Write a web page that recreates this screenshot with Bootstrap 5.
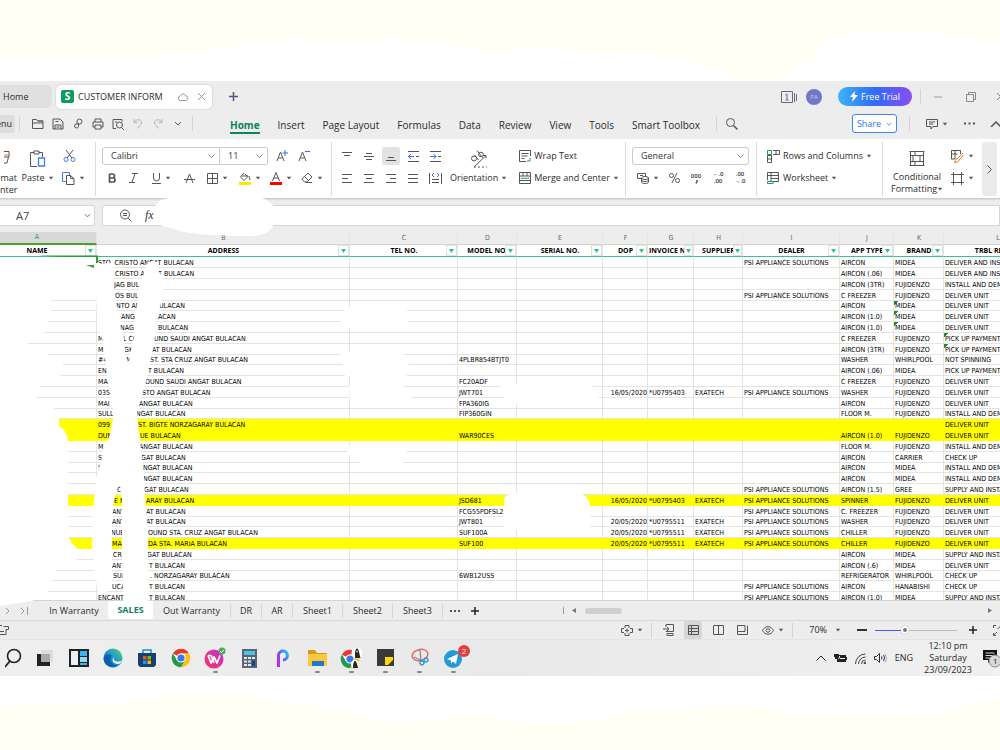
<!DOCTYPE html>
<html lang="en">
<head>
<meta charset="utf-8">
<meta name="viewport" content="width=device-width, initial-scale=1">
<title>Customer Inform - Spreadsheet</title>
<link href="https://cdn.jsdelivr.net/npm/bootstrap@5.3.0/dist/css/bootstrap.min.css" rel="stylesheet">
<style>
body{font:9px/12px "Open Sans","Noto Sans",sans-serif;color:#2b2b2b;background:#fffff3;overflow:hidden}
svg{display:block;flex:none;fill:none;stroke:#555;stroke-width:1}
button{border:0;background:none;padding:0;color:inherit;display:flex;align-items:center;justify-content:center;font:inherit;white-space:nowrap}
a{color:inherit;text-decoration:none;white-space:nowrap}
.desk{min-height:100vh}
.edge{width:100%;height:81px;stroke:none}
.edge-low{height:74px}
.app-shell{background:#ededed}
.slot{display:flex;align-items:center;justify-content:center;flex:none;gap:4px}
.s20{width:20px}.s22{width:22px}.s24{width:24px}.s28{width:28px}.s31{width:31px}.s34{width:34px}
.vline{width:1px;height:15px;background:#d4d4d4;flex:none}
/* title bar */
.titlebar{height:30px;padding-top:1px}
.home-tab{width:52px;height:23px;background:#e0e0e0;border-radius:0 5px 5px 0;padding-left:3px}
.doc-tab{width:156px;height:24px;margin-left:4px;padding:0 6px 0 5px;background:#fff;border-radius:5px;box-shadow:0 0 2px #bbb}
.logo-s{width:13px;height:13px;background:#0e9a60;color:#fff;border-radius:2px;font-weight:700;font-size:10px;line-height:13px;text-align:center}
.avatar{width:16px;height:16px;border-radius:50%;background:#7278c8;color:#c9cbf0;font-size:6px}
.trial{width:74px;height:19px;border-radius:10px;color:#fff;background:linear-gradient(90deg,#3cb4f8,#2f6cf6 50%,#8a4df5);gap:3px}
/* menu bar */
.menubar{height:28px;padding-bottom:3px;font-size:10px}
.menu-btn{width:15px;height:18px;background:#dedede;border-radius:0 3px 3px 0;font-size:9px;justify-content:flex-end;padding-right:3px;overflow:hidden}
.menu-links{gap:18px;margin-left:37px}
.menu-links a{padding:5px 0 3px}
.menu-links a.now{color:#0b8457;font-weight:700;border-bottom:2px solid #0b8457;padding-bottom:1px}
.share{width:45px;height:19px;border:1px solid #3a86f7;border-radius:3px;background:#fff;color:#2a78f0;gap:5px;font-size:9px}
/* ribbon */
.ribbon{height:60px;background:#fff;border-bottom:1px solid #ccc;box-shadow:0 1px 1px #ddd;position:relative}
.grp{height:54px;margin-top:3px;border-right:1px solid #dcdcdc;flex:none}
.grp-a{width:96px}.grp-b{width:236px;padding-left:6px}.grp-c{width:294px}.grp-d{width:131px;padding-left:6px}.grp-e{width:126px;padding-left:10px}.grp-f{padding-left:8px;border:0}
.grp-c .slot,.grp-e .slot{gap:3px}
.line-t,.line-b{height:22px;display:flex;align-items:center}
.line-t{margin-top:3px}
.pick{height:18px;border:1px solid #ccc;border-radius:3px;background:#fff;font:inherit;color:#333;appearance:none;padding:0 8px;
 background:#fff url("data:image/svg+xml,%3Csvg xmlns='http://www.w3.org/2000/svg' width='7' height='5'%3E%3Cpath d='M.5.5l3 3 3-3' fill='none' stroke='%23888'/%3E%3C/svg%3E") no-repeat right 4px center}
.pick-font{width:118px;border-radius:3px 0 0 3px}.pick-size{width:48px;border-radius:0 3px 3px 0;border-left:0}.pick-num{width:117px}
.on-btn{background:#e2e2e2;border-radius:2px;width:18px;height:18px;margin:0 2px}
.more-btn{width:15px;height:54px;background:#ebebeb;border-radius:3px;margin-left:8px}
.tiny{flex-direction:column;font-size:6px;line-height:7px;font-weight:600;color:#333}
/* formula bar */
.formula{height:33px}
.field{height:21px;background:#fff;border:1px solid #d6d6d6;border-radius:0 3px 3px 0}
.cell-name{width:95px;border-left:0}
.cell-name input{width:68px;font-size:11px;margin-left:16px;padding:0;border:0;background:none;color:#444}
.fx-box{margin-left:7px;border-radius:3px 0 0 3px}
.fx-box input{border:0;background:none;min-width:0;height:15px}
.fx{font:italic 12px "Liberation Serif",serif;color:#333}
/* sheet */
.grid-view{height:368px;overflow:hidden;background:#fff}
.book{table-layout:fixed;width:1052px;border-collapse:separate;border-spacing:0;font:7px/9px "DejaVu Sans Condensed","Open Sans",sans-serif;color:#000}
.book th,.book td{padding:0 0 0 1px;overflow:hidden;white-space:nowrap;border-right:1px solid #e4e4e4;border-bottom:1px solid #e4e4e4;vertical-align:middle}
.book .letters th{height:13px;background:#ededed;color:#666;font-weight:400;text-align:center;border-bottom:1px solid #d5d5d5}
.book .letters th.cur{background:#d8d8d8;color:#1f9a64;border-bottom:2px solid #4aa02c}
.book .letters th:first-child,.book .heads th:first-child{padding-right:23px}
.book .heads th{height:12px;text-align:center;border-bottom:1px solid #3fc08b;position:relative;font:700 7px/9px "Open Sans",sans-serif}
.book .heads th:nth-child(7){text-align:left}
.filt{position:absolute;right:0;top:0;width:11px;height:11px;background:#fff;border:1px solid #e0e0e0}
.book th:nth-child(7) .filt,.book th:nth-child(8) .filt{width:9px}
.book tbody tr{height:11px}
.book tbody tr:nth-child(5n){height:10px}
.book tbody td{line-height:8px;padding-top:1px}
.book tr.hot td{background:#ff0;border-color:#ff0}
.book .num{text-align:right}
.book td.flag{background:linear-gradient(135deg,#1b8f2c 3px,transparent 3px)}
.piece{display:inline-block;vertical-align:top}
.covers{position:absolute;left:0;top:0;z-index:2;pointer-events:none;stroke:none}
/* bottom bars */
.sheet-tabs{height:20px;border-top:1px solid #d4d4d4}
.tab-x{flex:none;text-align:center;line-height:14px;border-right:1px solid #d6d6d6}
.tab-77{width:78px}.tab-31{width:31px}.tab-50{width:50px}.tab-67{width:68px;border:0;margin-left:11px}
.tab-now{width:45px;height:18px;line-height:18px;background:#fff;border:0;border-radius:0 0 3px 3px;color:#0b8457;font-weight:700;align-self:flex-start}
.thumb{width:37px;height:6px;border-radius:3px;background:#cfcfcf}
.status{height:19px;border-top:1px solid #d8d8d8}
.status .hit{width:18px;height:18px;background:#d6d6d6;border-radius:2px}
.zoomer{appearance:none;width:82px;height:10px;background:linear-gradient(90deg,#3a62f0 35%,#bbb 35%) center/100% 1px no-repeat;margin:0}
.zoomer::-webkit-slider-thumb{appearance:none;width:8px;height:8px;border-radius:50%;background:#777;border:2px solid #fff;box-shadow:0 0 1px #888}
.taskbar{height:37px;background:linear-gradient(90deg,#efefef,#e9e9e9 50%,#f0f0f0);border-top:1px solid #e4e4e4}
.task{height:36px;flex:none;position:relative}
.task svg{stroke:none}
.task.run::after{content:"";position:absolute;bottom:3px;width:5px;height:2px;border-radius:1px;background:#888}
.note{position:absolute;right:0;top:5px;width:12px;height:12px;border-radius:50%;background:#e83c3c;color:#fff;font-size:8px;line-height:12px;text-align:center}
.clock{width:54px;text-align:center;font-size:9px;line-height:12px}
</style>
</head>
<body>
<svg width="0" height="0" class="position-absolute"><defs>
<symbol id="dn" viewBox="0 0 6 4"><path d="M.8.8h4.400L3 3.400z" fill="#555" stroke="none"/></symbol>
<symbol id="cv" viewBox="0 0 8 5"><path d="M1 1l3 3 3-3"/></symbol>
<linearGradient id="edg" x1="0" y1="1" x2="1" y2="0"><stop offset="0" stop-color="#0b56a8"/><stop offset=".5" stop-color="#1a93d8"/><stop offset="1" stop-color="#5fd95a"/></linearGradient>
<linearGradient id="wps" x1="0" y1="1" x2="1" y2="0"><stop offset="0" stop-color="#f9345b"/><stop offset="1" stop-color="#c32fe0"/></linearGradient>
<linearGradient id="pp" x1="0" y1="1" x2="1" y2="0"><stop offset="0" stop-color="#d81be0"/><stop offset=".5" stop-color="#6a5cf0"/><stop offset="1" stop-color="#19c8f5"/></linearGradient>
<g id="chr"><circle cx="10" cy="10" r="9.300" fill="#fff"/><path d="M10 10L1.900 5.400A9.300 9.300 0 0 1 18.100 5.400H10z" fill="#e33b2e"/><path d="M18.100 5.400A9.300 9.300 0 0 1 10 19.300L14 12.300 14 5.400z" fill="#fbc116"/><path d="M1.900 5.400A9.300 9.300 0 0 0 10 19.300L14 12.300H6z" fill="#219a4c"/><circle cx="10" cy="10" r="4.600" fill="#fff"/><circle cx="10" cy="10" r="3.600" fill="#3b78e7"/></g>
</defs></svg>
<div class="desk d-flex flex-column">
<svg class="edge" viewBox="0 0 1000 81" preserveAspectRatio="none"><path fill="#fff" d="M0 57C30 57 60 56 95 55C125 54 130 60 150 56C180 52 215 50 250 43C275 38 300 38 320 40C350 43 370 38 395 39C430 40 450 43 470 48C500 56 515 47 545 49C590 52 620 51 650 54C680 58 710 66 725 73L735 79H778C790 74 785 66 805 63C820 60 815 42 830 37C850 30 870 34 890 32C920 30 940 31 955 35C970 40 985 41 1000 43V81H0z"/></svg>
<div class="app-shell position-relative">
 <header>
  <div class="titlebar d-flex align-items-center">
   <a href="#" class="home-tab d-flex align-items-center">Home</a>
   <div class="doc-tab d-flex align-items-center"><span class="logo-s">S</span><span class="ms-1 flex-fill">CUSTOMER INFORM</span>
    <svg class="me-2" width="12" height="10" viewBox="0 0 12 10"><path style="stroke:#999" d="M3 8.500a2.300 2.300 0 0 1 .3-4.500 3 3 0 0 1 5.700 0 2.300 2.300 0 0 1 .2 4.500z"/></svg>
    <button aria-label="Close tab"><svg width="9" height="9" viewBox="0 0 9 9"><path style="stroke:#999" d="M1 1l7 7M8 1L1 8"/></svg></button></div>
   <button class="ms-3" aria-label="New tab"><svg width="11" height="11" viewBox="0 0 11 11"><path style="stroke:#4c5880;stroke-width:1.500" d="M5.500 1v9M1 5.500h9"/></svg></button>
   <div class="ms-auto d-flex align-items-center">
    <svg width="17" height="12" viewBox="0 0 17 12"><path style="stroke:#666a80" d="M.5.500h11v11H.5zM13.500 2v9M15.500 3v7M4.500 4L6 3v6M4.500 9h3"/></svg>
    <span class="avatar slot ms-2 me-3">PA</span>
    <button class="trial me-2"><svg width="8" height="11" viewBox="0 0 8 11"><path d="M5 0L0 6h3l-1 5 6-7H4.500z" fill="#fff" stroke="none"/></svg>Free Trial</button>
    <span class="vline"></span>
    <button class="s34" aria-label="Minimise"><svg width="8" height="2"><path style="stroke:#999" d="M0 1h8"/></svg></button>
    <button class="s31" aria-label="Restore"><svg width="10" height="10" viewBox="0 0 10 10"><path style="stroke:#888" d="M.5 2.500h7v7h-7zM2.500 2.500v-2h7v7h-2"/></svg></button>
    <button aria-label="Close"><svg width="14" height="9" viewBox="0 0 14 9"><path style="stroke:#888" d="M11 1l7 7M18 1l-7 7"/></svg></button>
   </div>
  </div>
  <div class="menubar d-flex align-items-center">
   <button class="menu-btn">enu</button><span class="vline ms-1 me-2"></span>
   <button class="s20" aria-label="Open"><svg width="12" height="12" viewBox="0 0 12 12"><path d="M.5 10.500v-9h4l1 1.500h5.500v7.500zM.5 5h10.500M6 3h5"/></svg></button>
   <button class="s20" aria-label="Save"><svg width="12" height="12" viewBox="0 0 12 12"><path d="M1 1h7l3 3v7H1zM3 11V7h6v4M3.500 3.500h3M4.500 9h3"/></svg></button>
   <button class="s20" aria-label="Share link"><svg width="11" height="12" viewBox="0 0 11 12"><path d="M4 6V3.500A2.500 2.500 0 1 1 6.500 6H3.500A2 2 0 1 0 5.500 8.500V5"/></svg></button>
   <button class="s20" aria-label="Print"><svg width="12" height="12" viewBox="0 0 12 12"><path d="M3 4V1h6v3M3 9H1V4h10v5H9M3 7h6v4H3z"/></svg></button>
   <button class="s20" aria-label="Preview"><svg width="13" height="12" viewBox="0 0 13 12"><path d="M4 10.500H1v-9h9v2M3 4h2"/><circle cx="7.500" cy="7" r="3"/><path d="M9.500 9.500L12 12"/></svg></button>
   <button class="s20" aria-label="Undo"><svg width="10" height="11" viewBox="0 0 10 11"><path style="stroke:#b5b5b5" d="M1 1v3.500h3.500M1 4.500C4 0 9 1.500 8.500 5 8 7 6 8 4.500 10.500"/></svg></button>
   <button class="s20" aria-label="Redo"><svg width="10" height="11" viewBox="0 0 10 11"><path style="stroke:#b5b5b5" d="M9 1v3.500H5.500M9 4.500C6 0 1 1.500 1.500 5 2 7 4 8 5.500 10.500"/></svg></button>
   <button class="s20" aria-label="More"><svg width="8" height="5"><use href="#cv"/></svg></button>
   <span class="vline ms-1"></span>
   <nav class="menu-links d-flex"><a class="now" href="#">Home</a><a href="#">Insert</a><a href="#">Page Layout</a><a href="#">Formulas</a><a href="#">Data</a><a href="#">Review</a><a href="#">View</a><a href="#">Tools</a><a href="#">Smart Toolbox</a></nav>
   <span class="vline ms-3 me-2"></span>
   <button aria-label="Search"><svg width="13" height="13" viewBox="0 0 13 13"><circle cx="5.500" cy="5.500" r="4"/><path style="stroke-width:1.500" d="M8.500 8.500l4 4"/></svg></button>
   <div class="ms-auto d-flex align-items-center">
    <button class="share me-2">Share<svg width="6" height="4" viewBox="0 0 8 5"><path style="stroke:#2a78f0" d="M1 1l3 3 3-3"/></svg></button>
    <span class="vline ms-1 me-3"></span>
    <button class="slot" aria-label="Comments"><svg width="12" height="12" viewBox="0 0 12 12"><path d="M.5 1.500h11v7H7L5 11V8.500H.5zM3 4h6M3 6h4"/></svg><svg width="6" height="4"><use href="#dn"/></svg></button>
    <button class="s34 ms-1" aria-label="Options"><svg width="11" height="3" viewBox="0 0 11 3"><path d="M0 1.500h2M4.500 1.500h2M9 1.500h2" style="stroke-width:2"/></svg></button>
    <button class="ms-1" aria-label="Collapse"><svg width="10" height="6" viewBox="0 0 10 6"><path style="stroke-width:1.500" d="M1 6l5-5 5 5"/></svg></button>
   </div>
  </div>
 </header>

 <section class="ribbon d-flex">
  <div class="grp grp-a d-flex">
   <button class="flex-column align-items-end justify-content-start"><svg class="mt-2 mb-2" width="13" height="14" viewBox="0 0 13 14"><path d="M-2 1.500H5V5M-2 7H5V5M4.500 7L3 13H-2"/><path style="stroke:#e07a3a" d="M-2 5h7"/></svg><span>mat<br>nter</span></button>
   <div class="d-flex flex-column align-items-center ms-1">
    <svg class="mt-2 mb-1" width="18" height="18" viewBox="0 0 18 18"><path d="M8 16.500H1.500v-14H5M10 2.500h3.500V7M5 1h5v3H5z"/><path style="stroke:#4a7bea;stroke-width:1.300" d="M9.500 8h6v8h-6z"/></svg>
    <button class="slot">Paste<svg width="6" height="4"><use href="#dn"/></svg></button></div>
   <div class="ms-1">
    <div class="line-t"><button class="s22" aria-label="Cut"><svg width="13" height="12" viewBox="0 0 13 12"><path d="M3 0l6 8M10 0L4 8"/><circle cx="3" cy="9.500" r="2" style="stroke:#4a7bea"/><circle cx="10" cy="9.500" r="2" style="stroke:#4a7bea"/></svg></button></div>
    <div class="line-b"><button class="slot ms-1" aria-label="Copy"><svg width="13" height="13" viewBox="0 0 13 13"><path style="stroke:#4a7bea" d="M4 9.500H.5v-9h7V3"/><path d="M4.500 3.500h4l3.500 3v6H4.500zM8.500 3.500v3H12"/></svg><svg width="6" height="4"><use href="#dn"/></svg></button></div>
   </div>
  </div>
  <div class="grp grp-b">
   <div class="line-t"><select class="pick pick-font" aria-label="Font"><option>Calibri</option></select><select class="pick pick-size" aria-label="Size"><option>11</option></select>
    <button class="s20 ms-1" aria-label="Grow font"><svg width="12" height="12" viewBox="0 0 12 12"><path d="M1 11l3.500-9L8 11M2.500 8h4"/><path style="stroke:#3a6cf0" d="M9 0v6M6.500 3H12"/></svg></button>
    <button class="s24" aria-label="Shrink font"><svg width="12" height="12" viewBox="0 0 12 12"><path d="M1 11l3.500-9L8 11M2.500 8h4"/><path style="stroke:#3a6cf0" d="M7 1.500h5"/></svg></button></div>
   <div class="line-b">
    <button class="s20" aria-label="Bold"><svg width="9" height="10" viewBox="0 0 9 10"><path style="stroke-width:1.700" d="M1.500 1v8H5a2 2 0 0 0 0-4H1.500M1.500 1h3a2 2 0 0 1 0 4"/></svg></button>
    <button class="s22" aria-label="Italic"><svg width="9" height="10" viewBox="0 0 9 10"><path d="M3 .5h6M0 9.500h6M6 .5l-3 9"/></svg></button>
    <button class="slot s34" aria-label="Underline"><svg width="9" height="11" viewBox="0 0 9 11"><path d="M1.500 0v5a3 3 0 0 0 6 0V0M0 10.500h9"/></svg><svg width="6" height="4"><use href="#dn"/></svg></button>
    <button class="s22" aria-label="Strikethrough"><svg width="11" height="10" viewBox="0 0 11 10"><path d="M2 10l3.500-9L9 10M0 6.500h11"/></svg></button>
    <button class="slot s34" aria-label="Borders"><svg width="11" height="11" viewBox="0 0 11 11"><path d="M.5.500h10v10H.5zM5.500.5v10M.5 5.500h10"/></svg><svg width="6" height="4"><use href="#dn"/></svg></button>
    <button class="slot s31" aria-label="Fill colour"><svg width="12" height="13" viewBox="0 0 12 13"><path d="M5 1L1.500 5l3.500 3.500L9 4.500 6 2M3 4h6M10 4l1 4"/><path d="M0 11.500h12" style="stroke:#f5ee00;stroke-width:3"/></svg><svg width="6" height="4"><use href="#dn"/></svg></button>
    <button class="slot s31" aria-label="Font colour"><svg width="12" height="13" viewBox="0 0 12 13"><path d="M2.500 9L6 .5 9.500 9M4 6h4"/><path d="M0 11.500h12" style="stroke:#f00;stroke-width:3"/></svg><svg width="6" height="4"><use href="#dn"/></svg></button>
    <button class="slot s31" aria-label="Clear"><svg width="12" height="12" viewBox="0 0 12 12"><path d="M7 1l4 4-5 5H3.500L.8 7zM3.500 4.500l4 4M5 10.500h6"/></svg><svg width="6" height="4"><use href="#dn"/></svg></button>
   </div>
  </div>
  <div class="grp grp-c d-flex">
   <div class="ms-1">
    <div class="line-t">
     <button class="s22" aria-label="Top"><svg width="10" height="10" viewBox="0 0 10 10"><path d="M0 1.500h10M2 4.500h6"/></svg></button>
     <button class="s22" aria-label="Middle"><svg width="10" height="10" viewBox="0 0 10 10"><path d="M2 2.500h6M0 5.500h10M2 8.500h6"/></svg></button>
     <button class="on-btn" aria-label="Bottom"><svg width="10" height="10" viewBox="0 0 10 10"><path d="M2 6.500h6M0 9.500h10"/></svg></button>
     <button class="s22" aria-label="Outdent"><svg width="11" height="11" viewBox="0 0 11 11"><path d="M0 .5h11M8 5.500h3M0 10.500h11"/><path style="stroke:#3a6cf0" d="M0 5.500h6M3 3L.5 5.500 3 8"/></svg></button>
     <button class="s22" aria-label="Indent"><svg width="11" height="11" viewBox="0 0 11 11"><path d="M0 .5h11M8 5.500h3M0 10.500h11"/><path style="stroke:#3a6cf0" d="M0 5.500h6M3.500 3L6 5.500 3.500 8"/></svg></button>
    </div>
    <div class="line-b">
     <button class="s22" aria-label="Left"><svg width="10" height="10" viewBox="0 0 10 10"><path d="M0 1.500h10M0 5.500h6M0 9.500h10"/></svg></button>
     <button class="s22" aria-label="Centre"><svg width="10" height="10" viewBox="0 0 10 10"><path d="M0 1.500h10M2 5.500h6M0 9.500h10"/></svg></button>
     <button class="s22" aria-label="Right"><svg width="10" height="10" viewBox="0 0 10 10"><path d="M0 1.500h10M4 5.500h6M0 9.500h10"/></svg></button>
     <button class="s22" aria-label="Justify"><svg width="10" height="10" viewBox="0 0 10 10"><path d="M0 1.500h10M0 5.500h10M0 9.500h10"/></svg></button>
     <button class="s22" aria-label="Distribute"><svg width="13" height="11" viewBox="0 0 13 11"><path d="M.5 0v11M12.500 0v11M3 6.500h7M3 9.500h7"/><path style="stroke:#3a6cf0" d="M5 0L3 2l2 2M8 0l2 2-2 2"/></svg></button>
    </div>
   </div>
   <div class="d-flex flex-column align-items-center ms-1">
    <svg class="mt-2 mb-1" width="18" height="18" viewBox="0 0 18 18"><circle cx="4" cy="8.500" r="2.500"/><path d="M4.500 5l4 5M7 .5l5.500 7"/><circle cx="11" cy="4.500" r="2.300"/><path d="M4 17L16 5.500M13 5.500h3v3M4 17h2M8 17h2M12 17h2M16 17h1"/></svg>
    <button class="slot">Orientation<svg width="6" height="4"><use href="#dn"/></svg></button></div>
   <div class="ms-2 ps-1">
    <div class="line-t"><button class="slot"><svg width="12" height="12" viewBox="0 0 12 12"><path d="M11.500 6V.5H.5v11H7M2.500 3.500h7M2.500 6h6M2.500 8.500h3"/><path style="stroke:#1c9c62" d="M11 8v3H8"/></svg>Wrap Text</button></div>
    <div class="line-b"><button class="slot"><svg width="12" height="12" viewBox="0 0 12 12"><path d="M.5.500h11v11H.5zM.5 4h11M.5 8.500h11M4 .5V4M8 .5V4"/><path style="stroke:#1c9c62" d="M2 6.300h8"/></svg>Merge and Center<svg width="6" height="4"><use href="#dn"/></svg></button></div>
   </div>
  </div>
  <div class="grp grp-d">
   <div class="line-t"><select class="pick pick-num" aria-label="Number format"><option>General</option></select></div>
   <div class="line-b">
    <button class="slot s31" aria-label="Currency"><svg width="12" height="12" viewBox="0 0 12 12"><path d="M5 6.500H.5v-5h8V4M3 3.500h3"/><ellipse cx="8" cy="6" rx="3.500" ry="1.500"/><path d="M4.500 6v4c0 2 7 2 7 0V6M4.500 8c0 2 7 2 7 0"/></svg><svg width="6" height="4"><use href="#dn"/></svg></button>
    <button class="s22" aria-label="Percent"><svg width="11" height="10" viewBox="0 0 11 10"><circle cx="2.500" cy="2.500" r="2"/><circle cx="8.500" cy="7.500" r="2"/><path d="M8 0L3 10"/></svg></button>
    <button class="s22 tiny" aria-label="Thousands"><span>000</span><svg width="3" height="4" viewBox="0 0 3 4"><path d="M2 0v1.500L1 3.500" style="stroke-width:1.500"/></svg></button><button class="s22 tiny"><span>&#8592;.0</span><span>.00</span></button><button class="s22 tiny"><span>.00</span><span>&#8594;.0</span></button>
   </div>
  </div>
  <div class="grp grp-e">
   <div class="line-t"><button class="slot"><svg width="13" height="13" viewBox="0 0 13 13"><path d="M.5 5.500h4v7h-4zM.5 9h4M6 .5h6.500v4H6M9 .5v4"/><path style="stroke:#1c9c62" d="M.5.500h4v4h-4z"/></svg>Rows and Columns<svg width="6" height="4"><use href="#dn"/></svg></button></div>
   <div class="line-b"><button class="slot"><svg width="13" height="13" viewBox="0 0 13 13"><path d="M.5 8V.5h11v9H6M.5 3.500h11M4 .5v9M4 6.500h8"/><path style="stroke:#1c9c62" d="M.5 9.500H6v2H.5z"/></svg>Worksheet<svg width="6" height="4"><use href="#dn"/></svg></button></div>
  </div>
  <div class="grp grp-f d-flex ms-auto">
   <div class="d-flex flex-column align-items-center">
    <svg class="mt-2 mb-1" width="16" height="17" viewBox="0 0 16 17"><path d="M1.500 1v15M14.500 1v15M.5 1.500h15M.5 15.500h15M1.500 5.500h13M1.500 11.500h13M6 1.500v4M6 11.500v4M4 5.500v6M11 5.500v6"/></svg>
    <button class="flex-column"><span>Conditional</span><span class="d-flex align-items-center">Formatting<svg width="6" height="4"><use href="#dn"/></svg></span></button></div>
   <div class="ms-2">
    <div class="line-t"><button class="slot" aria-label="Cell styles"><svg width="13" height="13" viewBox="0 0 13 13"><path d="M4 9H.5V.5h9V4M.5 4h6M4 .5V9"/><path style="stroke:#e07a3a" d="M12 3L6 9M12.500 5L8 10M6 9c-2 0-1 3-3 3 3 1 5 0 5-2"/></svg><svg width="6" height="4"><use href="#dn"/></svg></button></div>
    <div class="line-b"><button class="slot" aria-label="Frame"><svg width="13" height="13" viewBox="0 0 13 13"><path d="M2.500 0v13M10.500 0v13M0 2.500h13M0 10.500h13"/></svg><svg width="6" height="4"><use href="#dn"/></svg></button></div>
   </div>
   <button class="more-btn me-1" aria-label="Scroll ribbon"><svg width="5" height="9" viewBox="0 0 5 9"><path d="M.5.500l4 4-4 4"/></svg></button>
  </div>
 </section>

 <div class="formula d-flex align-items-center">
  <div class="field cell-name d-flex align-items-center"><input value="A7" aria-label="Cell name"><svg width="7" height="5" viewBox="0 0 8 5"><path d="M1 1l3 3 3-3"/></svg></div>
  <div class="field fx-box d-flex align-items-center flex-fill"><svg class="ms-3 me-2" width="14" height="13" viewBox="0 0 14 13"><circle cx="6" cy="5.500" r="4.500"/><path d="M9 9l3.500 3.500M4 4.500h4M4 6.500h4"/></svg><span class="fx ms-1">fx</span><input class="flex-fill" aria-label="Formula"></div>
 </div>

 <main class="grid-view">
  <table class="book"><colgroup id="cols"></colgroup><thead><tr class="letters" id="letters"></tr><tr class="heads" id="heads"></tr></thead><tbody id="rows"></tbody></table>
 </main>

 <div class="sheet-tabs d-flex align-items-center">
  <button class="ms-1" aria-label="Next"><svg width="8" height="8" viewBox="0 0 8 8"><path style="stroke:#999" d="M2 1l3 3-3 3"/></svg></button>
  <button class="ms-2" aria-label="Last"><svg width="9" height="8" viewBox="0 0 9 8"><path style="stroke:#999" d="M1 1l3 3-3 3M7.500 0v8"/></svg></button>
  <a href="#" class="tab-x tab-67">In Warranty</a><a href="#" class="tab-x tab-now">SALES</a><a href="#" class="tab-x tab-77">Out Warranty</a><a href="#" class="tab-x tab-31">DR</a><a href="#" class="tab-x tab-31">AR</a><a href="#" class="tab-x tab-50">Sheet1</a><a href="#" class="tab-x tab-50">Sheet2</a><a href="#" class="tab-x tab-50">Sheet3</a>
  <button class="s24" aria-label="More sheets"><svg width="10" height="2" viewBox="0 0 10 2"><path style="stroke-width:2" d="M0 1h2M4 1h2M8 1h2"/></svg></button>
  <button class="ms-1" aria-label="Add sheet"><svg width="8" height="8" viewBox="0 0 8 8"><path style="stroke:#222;stroke-width:1.500" d="M4 0v8M0 4h8"/></svg></button>
  <div class="d-flex align-items-center flex-fill ms-5 ps-4"><svg class="ms-2 me-2" width="5" height="7" viewBox="0 0 5 7"><path style="stroke:#999" d="M4.500 0v7"/></svg><svg class="me-2" width="5" height="5" viewBox="0 0 5 5"><path d="M4 0v5L0 2.500z" fill="#777" stroke="none"/></svg><span class="thumb"></span><svg class="ms-auto me-2" width="5" height="5" viewBox="0 0 5 5"><path d="M1 0v5l4-2.500z" fill="#777" stroke="none"/></svg></div>
 </div>
 <div class="status d-flex align-items-center">
  <svg width="9" height="11" viewBox="0 0 9 11"><path d="M0 .5h2M3.500 1.500h5v3H6v5H0M0 6.500h4"/></svg>
  <div class="ms-auto d-flex align-items-center">
   <button class="slot" aria-label="Move"><svg width="12" height="11" viewBox="0 0 12 11"><path d="M4 3V.5h4V3M4 8v2.500h4V8M3 3.500H.5v4H3M9 3.500h2.500v4H9M4 5.500h4M6 3.500v4"/></svg><svg width="6" height="4"><use href="#dn"/></svg></button>
   <span class="vline ms-2 me-1"></span>
   <button class="s24" aria-label="Reading"><svg width="11" height="12" viewBox="0 0 11 12"><path d="M3 3V.5h7.500v7H3V7M0 5h6M4 3l2 2-2 2M4 9.500h6v2H4z"/></svg></button>
   <button class="hit mx-1" aria-label="Normal view"><svg width="11" height="10" viewBox="0 0 11 10"><path d="M.5.500h10v9H.5zM.5 3.500h10M.5 6.500h10M3.500.5v9"/></svg></button>
   <button class="s24" aria-label="Page view"><svg width="11" height="10" viewBox="0 0 11 10"><path d="M.5.500h10v9H.5zM5.500.5v9"/></svg></button>
   <button class="s24" aria-label="Page break"><svg width="11" height="10" viewBox="0 0 11 10"><path d="M.5 9.500h10V.5M.5.500H8v6H.5zM.5 6.500v3"/></svg></button>
   <button class="slot ms-2" aria-label="Eye"><svg width="12" height="9" viewBox="0 0 12 9"><path d="M.5 4.500C3-.5 9-.5 11.500 4.500 9 9.500 3 9.500.5 4.500z"/><circle cx="6" cy="4.500" r="1.800"/></svg><svg width="6" height="4"><use href="#dn"/></svg></button>
   <span class="vline ms-2 me-3"></span>
   <button class="slot me-3"><span class="me-1">70%</span><svg width="6" height="4"><use href="#dn"/></svg></button>
   <button aria-label="Zoom out"><svg width="10" height="2"><path style="stroke:#333;stroke-width:2" d="M0 1h10"/></svg></button>
   <input type="range" class="zoomer mx-2" min="0" max="100" value="35" aria-label="Zoom">
   <button class="ms-1" aria-label="Zoom in"><svg width="8" height="8" viewBox="0 0 8 8"><path style="stroke:#222;stroke-width:1.500" d="M4 0v8M0 4h8"/></svg></button>
   <svg class="ms-3" width="7" height="11" viewBox="0 0 7 11"><path d="M.5 3V.5H3M.5 8v2.500H3M4.500 4L8 .5M4 7L1 10"/></svg>
  </div>
 </div>

 <footer class="taskbar d-flex align-items-center">
  <button class="task s28" aria-label="Search"><svg width="18" height="20" viewBox="0 0 18 20"><path style="stroke:#222;stroke-width:1.800;fill:none" d="M5 13L0 19"/><circle cx="9" cy="8" r="6.500" style="stroke:#222;stroke-width:1.600;fill:none"/></svg></button>
  <button class="task s34" aria-label="Task view"><svg width="18" height="18" viewBox="0 0 18 18"><path fill="#ddd" d="M5 1h12v12H5z"/><path fill="#222" d="M1 5h4v8h9v4H1z"/><path fill="#aaa" d="M5 5h9v8H5z"/></svg></button>
  <button class="task s34" aria-label="Widgets"><svg width="20" height="18" viewBox="0 0 20 18"><path fill="#222" d="M0 0h20v18H0z"/><path fill="#e9f2f8" d="M2 2h7v14H2z"/><path fill="#35b5ec" d="M11 2h7v5h-7zM11 14h7v2h-7z"/><path fill="#8ad9f6" d="M11 8h7v5h-7z"/></svg></button>
  <button class="task s34" aria-label="Edge"><svg width="20" height="20" viewBox="0 0 20 20"><circle cx="10" cy="10" r="9.500" fill="url(#edg)"/><path fill="#0f5fb0" d="M1 9C2 6 8 5 9 8 6 10 7 17 14 17.500 8 21 1 17 .6 11z"/><path fill="#eee" d="M11 9c-1 3 1 5 5 4.500 1.500 0 3-1 3-1C19 14 17 16 15 16c-5 0-7-4-4-7z"/></svg></button>
  <button class="task s34" aria-label="Store"><svg width="18" height="20" viewBox="0 0 18 20"><path style="stroke:#1a8fd0;stroke-width:1.500;fill:none" d="M5 6V2h8v4"/><path fill="#173f73" d="M0 5h18v12l-2 2H2l-2-2z"/><path fill="#f25022" d="M5 8h3.500v3.500H5z"/><path fill="#7fba00" d="M9.500 8H13v3.500H9.500z"/><path fill="#00a4ef" d="M5 12.500h3.500V16H5z"/><path fill="#ffb900" d="M9.500 12.500H13V16H9.500z"/></svg></button>
  <button class="task s34" aria-label="Chrome"><svg width="20" height="20" viewBox="0 0 20 20"><use href="#chr"/></svg></button>
  <button class="task s34 run" aria-label="WPS"><svg width="22" height="22" viewBox="0 0 22 22"><circle cx="10" cy="12" r="9.500" fill="url(#wps)"/><path style="stroke:#fff;stroke-width:1.700;fill:none;stroke-linejoin:round" d="M4 8.500h3l3 7.500M4 8.500L7 16l3-6 3 6 3-7.500"/><circle cx="18" cy="4" r="3.500" fill="#4cae50"/><path style="stroke:#fff;fill:none" d="M16 4l1.500 1.500L20 3"/></svg></button>
  <button class="task s34" aria-label="Calculator"><svg width="15" height="19" viewBox="0 0 15 19"><path fill="#596572" d="M0 0h15v19H0z"/><path fill="#4cc3ee" d="M2 2h11v4H2z"/><path fill="#e4e9ee" d="M2 8h3v2H2zM6 8h3v2H6zM10 8h3v2h-3zM2 11.500h3v2H2zM6 11.500h3v2H6zM2 15h3v2H2zM6 15h3v2H6z"/><path fill="#12478a" d="M10 11.500h3V17h-3z"/></svg></button>
  <button class="task s34" aria-label="PicsArt"><svg width="14" height="20" viewBox="0 0 14 20"><path style="stroke:url(#pp);stroke-width:3;fill:none" d="M2.500 19V7a4.500 4.500 0 1 1 4.500 5"/></svg></button>
  <button class="task s34 run" aria-label="Files"><svg width="19" height="18" viewBox="0 0 19 18"><path fill="#d99a1c" d="M0 1h7l2 3h10v4H0z"/><path fill="#fcc93c" d="M0 5h19v12H0z"/><path fill="#1f79cc" d="M4 12h12v5H4z"/></svg></button>
  <button class="task s34 run" aria-label="Chrome profile"><svg width="23" height="22" viewBox="0 0 23 22"><g transform="translate(0 2)"><use href="#chr"/></g><circle cx="17" cy="6" r="5.500" fill="#fff"/><path fill="#2a2427" d="M15 11c0-6 0-9 2-9.500 2 .5 2 4 3.500 9.500z"/><circle cx="17" cy="4.500" r="1" fill="#dfb8a4"/><circle cx="15" cy="17" r="4" fill="#fff"/><path fill="#2a2427" d="M13 21c0-5 1-7 2-7s2 2 3 7z"/></svg></button>
  <button class="task s34 run" aria-label="Notes"><svg width="17" height="18" viewBox="0 0 17 18"><path fill="#3a3a3a" d="M0 0h17v17H0z"/><path fill="#ffd80c" d="M8 8h8v3l-5 5H8z"/></svg></button>
  <button class="task s34 run" aria-label="Snip"><svg width="19" height="20" viewBox="0 0 19 20"><ellipse cx="10" cy="7" rx="8" ry="5.500" transform="rotate(-14 10 7)" style="stroke:#e96464;stroke-width:1.500;fill:none"/><path style="stroke:#888;fill:none;stroke-width:1.300" d="M4 9l9 4M10 2l1 11"/><path style="stroke:#3a9bd0;fill:none;stroke-width:1.500" d="M12 17a2 2 0 1 0-.1 0zM16 14a2 2 0 1 0-.1 0z"/></svg></button>
  <button class="task s34 run" aria-label="Telegram"><svg width="20" height="20" viewBox="0 0 20 20"><circle cx="10" cy="11" r="9" fill="#229bd8"/><path fill="#fff" d="M4 11l11-5-2 10-3-2.500-2 2V12.500z"/></svg><span class="note">2</span></button>
  <div class="ms-auto d-flex align-items-center">
   <svg class="me-2" width="10" height="6" viewBox="0 0 10 6"><path style="stroke:#222" d="M.5 5.500l4.500-4.500 4.500 4.500"/></svg>
   <svg class="me-2" width="13" height="10" viewBox="0 0 13 10"><path fill="#222" stroke="none" d="M3 2h9v7H3zM12 4h1v3h-1zM0 1h5v3H4v2H1V4H0z"/><path style="stroke:#eee" d="M5.500 3v1.500L4.500 6M6 5.500h5"/></svg>
   <svg class="me-2" width="11" height="11" viewBox="0 0 11 11"><path style="stroke:#444" d="M.5 11A10 10 0 0 1 10.500 1M3.500 11a7 7 0 0 1 7-7M6.500 11a4 4 0 0 1 4-4"/><circle cx="10" cy="10" r="1" fill="#222"/></svg>
   <svg class="me-2" width="13" height="10" viewBox="0 0 13 10"><path style="stroke:#333" d="M.5 3.500h2l3-3v9l-3-3h-2zM7.500 3.500q1 1.500 0 3M9.500 2q2 3 0 6"/><path style="stroke:#aaa" d="M11 .5q3 4.500 0 9"/></svg>
   <span>ENG</span>
   <div class="clock ms-2">12:10 pm<br>Saturday<br>23/09/2023</div>
   <svg class="ms-2" width="17" height="20" viewBox="0 0 17 20"><path fill="#111" stroke="none" d="M0 2h14v10H8l-3 3v-3H0z"/><path style="stroke:#ddd" d="M2.500 5h9M2.500 7.500h9M2.500 10h5"/><circle cx="12" cy="13" r="6" fill="#d8d8d8" style="stroke:#888"/><text x="10" y="16" font-size="8" fill="#222" stroke="none">1</text></svg>
  </div>
 </footer>

 <svg class="covers" width="1000" height="595" viewBox="0 81 1000 595">
  <g fill="#fff">
   <path d="M155 207C158 200 163 199 170 198H262C271 201 276 207 275 216 275 228 268 236 250 236 225 236 195 235 180 231 165 226 155 226 155 217z"/>
   <path d="M0 257L35 257 60 260 85 262 98 264 113 263 115 276 113 284 115 295 117 308 120 320 121 332 123 344 125 360 127 371 149 365 153 349 155 335 157 316 163 296 163 279 158 270 158 262 148 262 144 273 140 284 138 295 137 305 136 316 135 327 134 338 131 349 129 362 126 369 128 363 125 352 118 362 106 365 104 349 102 338 98 327 97 316 96 295 51 296 51 312 48 324 44 332 27 343 44 352 63 364 60 378 40 386 36 397 54 408 59 418V426Q67 430 68 442V492L68 506 69 538Q72 545 77 548L80 558 57 569 52 580 49 591 32 601 0 606z"/>
   <path d="M104 330L123 330 126 362 150 362 146 381 142 395 137 413 138 424 140 440 144 478 145 497 148 530 148 560 149 600 142 606H124L123 592 122 560 122 500 120 485 117 489 114 500 112 520 112 545 112 570 112 590 100 594 97 588 92 548 93 510 95 492 96 478 101 462 104 446 109 438 113 420 113 405 111 394 108 381 106 365z"/>
   <path d="M340 318Q342 306 362 304H400Q411 310 408 322 400 328 350 328 341 326 340 318zM340 352H402Q408 362 412 372L406 376H345zM349 386Q370 382 400 384 416 392 410 402 380 410 350 404zM500 386Q540 380 590 384 603 395 597 404 560 412 505 402zM345 446Q380 440 405 448 412 466 385 468 350 466 345 446z"/>
   <path d="M504 500Q504 494 516 493H578Q590 495 590 508V528Q570 534 505 530z"/>
  </g>
  <path fill="#2f9d3a" d="M38 255.500H98V263H96V257H60zM86 265h8v3z"/>
 </svg>
</div>
<svg class="edge edge-low flex-fill" viewBox="0 0 1000 74" preserveAspectRatio="none"><path fill="#fff" d="M0 0H1000V24C970 26 950 36 930 40 890 44 880 34 850 38 810 46 790 40 760 32 720 26 690 36 660 34 620 34 600 46 560 48 520 50 510 42 480 40 440 40 420 48 390 46 350 42 330 30 300 28 270 28 265 18 230 20 200 20 170 18 150 24 100 30 60 28 0 30z"/></svg>
</div>
<script>
const COLS=[['A',97,'NAME'],['B',253,'ADDRESS'],['C',108,'TEL NO.'],['D',59,'MODEL NO.'],['E',86,'SERIAL NO.'],['F',45,'DOP'],['G',46,'INVOICE N'],['H',49,'SUPPLIER'],['I',97,'DEALER'],['J',54,'APP TYPE'],['K',50,'BRAND'],['L',108,'TRBL REPORT']];
const P='PSI APPLIANCE SOLUTIONS',F='FUJIDENZO',M='MIDEA',A='AIRCON',DU='DELIVER UNIT',DI='DELIVER AND INSTALL',ID='INSTALL AND DEMO',PU='PICK UP PAYMENT',SI='SUPPLY AND INSTALL',CU='CHECK UP',E='EXATECH';
/* each row: address pieces as [start, text], model, date, invoice, supplier, dealer, type, brand, report, flags */
const ROWS=[
[[[0,'STO. CRISTO ANGAT BULACAN']],'','','','',P,A,M,DI],
[[[17,'CRISTO ANGAT BULACAN']],'','','','','',A+' (.06)',M,DI],
[[[16,'JAG BUL']],'','','','','',A+' (3TR)',F,ID],
[[[17,'OS BUL']],'','','','',P,'C FREEZER',F,DU],
[[[18,'NTO AN'],[61,'ULACAN']],'','','','','',A,M,DU,'K'],
[[[23,'ANG'],[60,'ACAN']],'','','','','',A+' (1.0)',M,DU,'K'],
[[[22,'NAG A'],[60,'BULACAN']],'','','','','',A+' (1.0)',M,DU,'K'],
[[[0,'M'],[25,'L CO'],[56,'UND SAUDI ANGAT BULACAN']],'','','','','','C FREEZER',F,PU,'L'],
[[[0,'M'],[26,'GK'],[54,'AT BULACAN']],'','','','','',A+' (3TR)',F,PU,'L'],
[[[0,'#4'],[28,'M'],[52,'ST. STA CRUZ ANGAT BULACAN']],'4PLBR854BTJT0','','','','','WASHER','WHIRLPOOL','NOT SPINNING'],
[[[0,'EN'],[50,'T BULACAN']],'','','','','',A+' (.06)',M,PU],
[[[0,'MA'],[47,'OUND SAUDI ANGAT BULACAN']],'FC20ADF','','','','','C FREEZER',F,DU],
[[[0,'035'],[44,'STO ANGAT BULACAN']],'JWT701','16/05/2020','*U0795403',E,P,'WASHER',F,DU],
[[[0,'MAI'],[41,'ANGAT BULACAN']],'FPA360IG','','','','',A,F,DU],
[[[0,'SULL'],[38,'NGAT BULACAN']],'FIP360GIN','','','','','FLOOR M.',F,ID],
[[[0,'099'],[40,'ST. BIGTE NORZAGARAY BULACAN']],'','','','','','','',DU,'hot'],
[[[0,'DUN'],[42,'UE BULACAN']],'WAR90CES','','','','',A+' (1.0)',F,DU,'hot'],
[[[0,'M'],[41,'ANGAT BULACAN']],'','','','','','FLOOR M.',F,ID],
[[[0,'ST'],[43,'GAT BULACAN']],'','','','','',A,'CARRIER',CU],
[[[0,'S'],[45,'NGAT BULACAN']],'','','','','',A,M,ID],
[[[45,'NGAT BULACAN']],'','','','','',A,M,ID],
[[[19,'C'],[46,'GAT BULACAN']],'','','','',P,A+' (1.5)','GREE',SI],
[[[16,'E N'],[48,'ARAY BULACAN']],'JSD681','16/05/2020','*U0795403',E,P,'SPINNER',F,DU,'hot'],
[[[14,'ANT'],[48,'AT BULACAN']],'FCG55PDFSL2','','','',P,'C. FREEZER',F,DU],
[[[14,'ANT'],[48,'AT BULACAN']],'JWT801','20/05/2020','*U0795511',E,P,'WASHER',F,DU],
[[[13,'NUE'],[50,'OUND STA. CRUZ ANGAT BULACAN']],'SUF100A','20/05/2020','*U0795511',E,P,'CHILLER',F,DU],
[[[14,'MA'],[50,'DA STA. MARIA BULACAN']],'SUF100','20/05/2020','*U0795511',E,P,'CHILLER',F,DU,'hot'],
[[[15,'CR'],[49,'GAT BULACAN']],'','','','','',A,M,SI],
[[[14,'ANT'],[51,'T BULACAN']],'','','','','',A+' (.6)',M,DU],
[[[15,'SUL'],[52,'. NORZAGARAY BULACAN']],'6WB12USS','','','','','REFRIGERATOR','WHIRLPOOL',CU],
[[[14,'UCA'],[51,'T BULACAN']],'','','','',P,A,'HANABISHI',CU],
[[[0,'ENCANT'],[51,'T BULACAN']],'','','','',P,A+' (1.0)',M,SI]];
const byId=i=>document.getElementById(i);
byId('cols').innerHTML=COLS.map(c=>`<col style="width:${c[1]}px">`).join('');
byId('letters').innerHTML=COLS.map((c,i)=>`<th${i?'':' class="cur"'}>${c[0]}</th>`).join('');
byId('heads').innerHTML=COLS.map(c=>`<th>${c[2]}<button class="filt" aria-label="Filter ${c[2]}"><svg width="5" height="4" viewBox="0 0 5 4"><path d="M0 0h5L2.500 4z" fill="#2fc48a" stroke="none"/></svg></button></th>`).join('');
/* a piece fills the space up to the start of the next one */
const pieces=a=>a.map((p,i)=>{const lead=i?0:p[0],next=a[i+1];return `<span class="piece" style="margin-left:${lead}px;${next?'width:'+(next[0]-p[0])+'px':''}">${p[1]}</span>`}).join('');
byId('rows').innerHTML=ROWS.map(r=>`<tr class="${r[9]==='hot'?'hot':''}"><td></td><td>${pieces(r[0])}</td><td></td><td>${r[1]}</td><td></td><td class="num">${r[2]}</td><td>${r[3]}</td><td>${r[4]}</td><td>${r[5]}</td><td>${r[6]}</td><td class="${r[9]==='K'?'flag':''}">${r[7]}</td><td class="${r[9]==='L'?'flag':''}">${r[8]}</td></tr>`).join('');
</script>
<script src="https://cdn.jsdelivr.net/npm/bootstrap@5.3.0/dist/js/bootstrap.bundle.min.js"></script>
</body>
</html>
